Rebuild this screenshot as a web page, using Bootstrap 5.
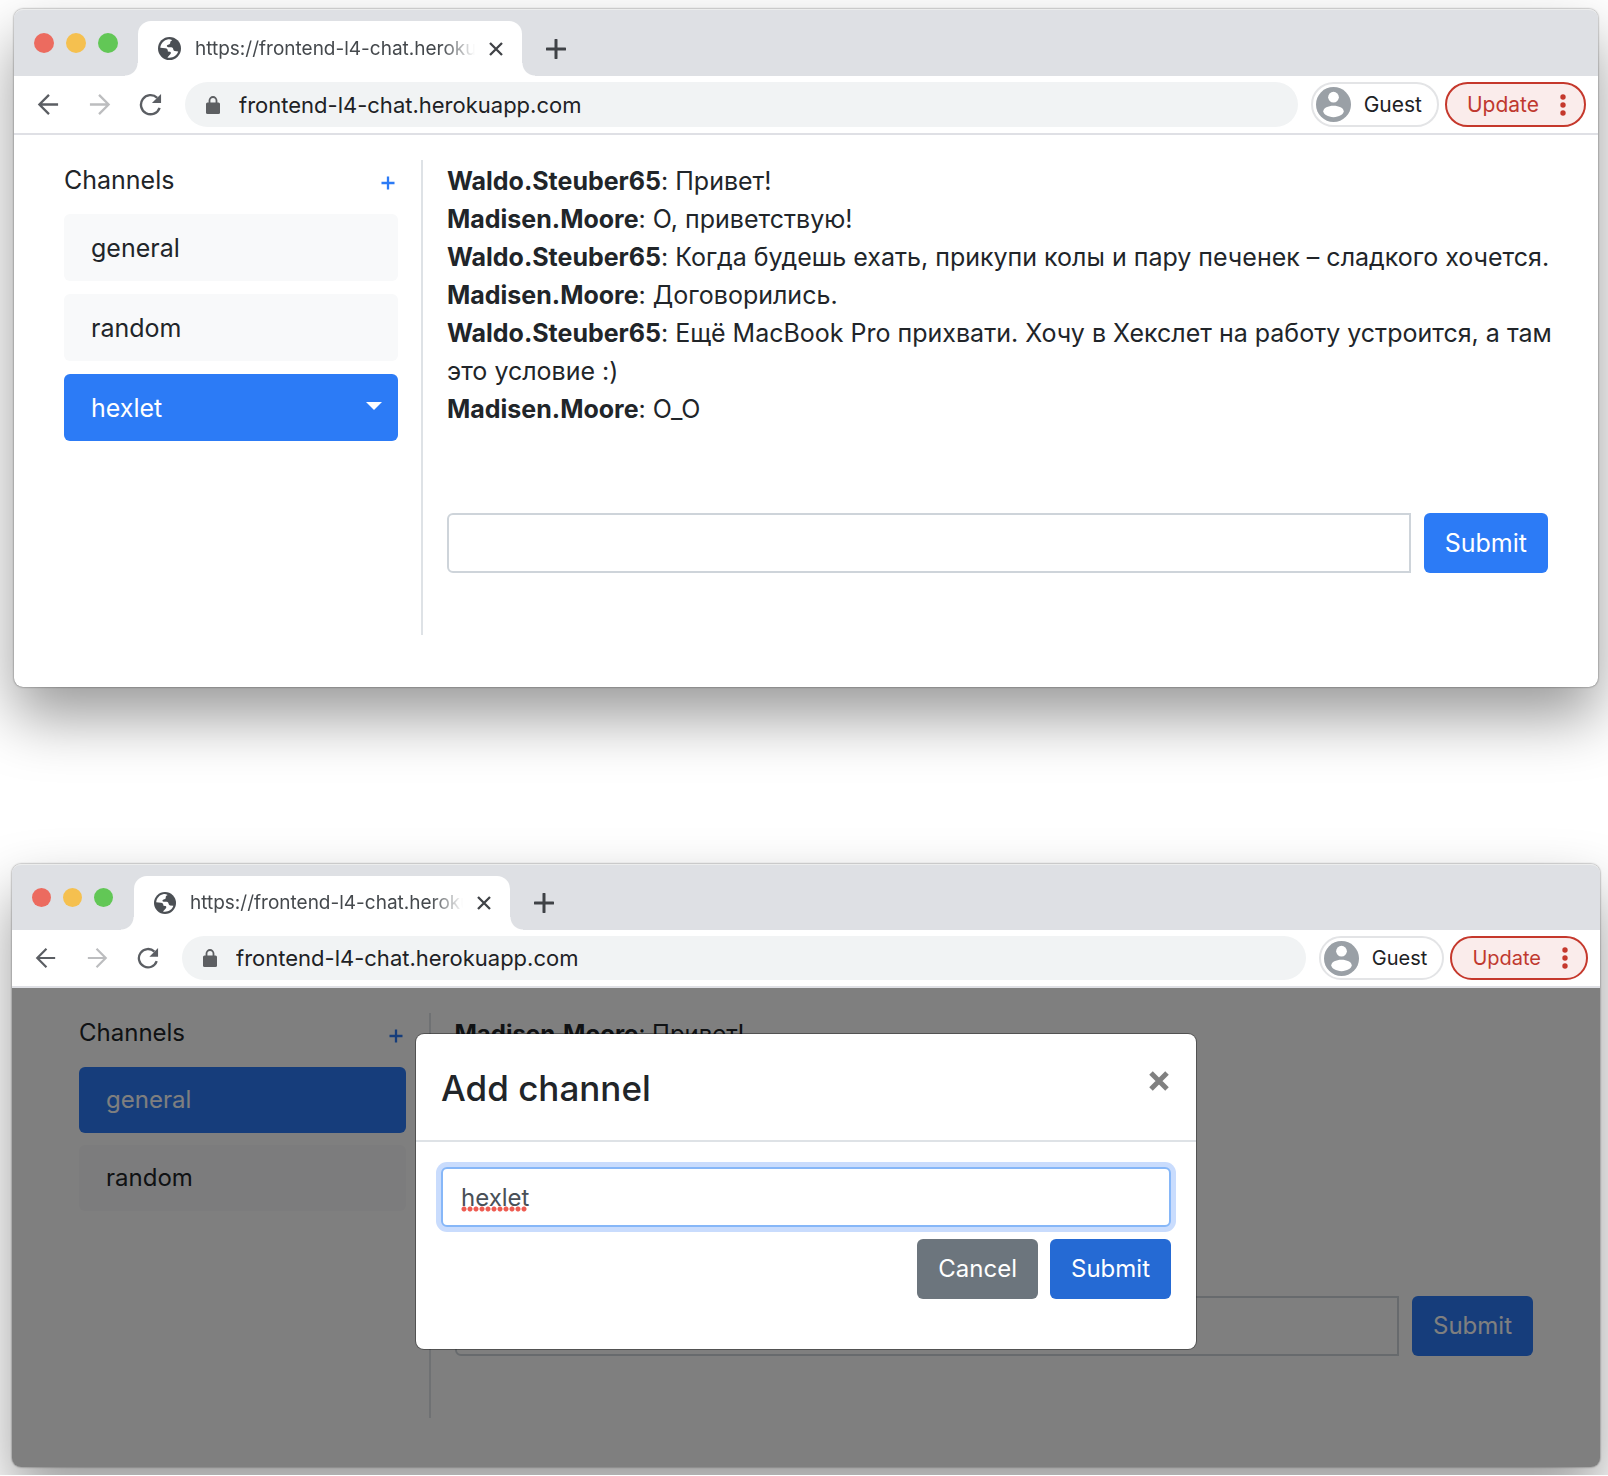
<!DOCTYPE html>
<html lang="en">
<head>
<meta charset="utf-8">
<meta name="viewport" content="width=device-width, initial-scale=1">
<title>Chat</title>
<link href="https://cdn.jsdelivr.net/npm/bootstrap@5.3.0/dist/css/bootstrap.min.css" rel="stylesheet">
<style>
  body { background: #fff; color: #212529; font-family: Inter, "Noto Sans", sans-serif; font-size: 24px; line-height: 38px; overflow-x: hidden; }
  button { font-family: inherit; }

  /* browser window frame */
  .win { background: #fff; font-size: var(--text); border-radius: 9px; box-shadow: 0 0 2px rgba(0,0,0,.6), 0 30px 60px rgba(0,0,0,.4); }
  .win-chat { --text: 25px; --strip: 67px; --light: 20px; --tab: 384px; --icon: 23px; --pill: 45px; --nav-gap: 28px; --chip-text: 21px; --side: 26px; --rows: 475px; --item: 67px; --item-gap: 13px; margin: 9px 10px 177px 14px; }
  .win-modal { --text: 24px; --strip: 66px; --light: 19px; --tab: 376px; --icon: 22px; --pill: 44px; --nav-gap: 29px; --chip-text: 20px; --side: 43px; --rows: 405px; --item: 66px; --item-gap: 12px; margin: 0 8px 8px 12px; }

  .strip { height: var(--strip); background: #dee0e4; border-radius: 9px 9px 0 0; box-shadow: inset 0 2px 0 -1px #eceded; }
  .lights { gap: 12px; padding: 0 20px; }
  .win-modal .lights { padding-right: 21px; }
  .light { width: var(--light); height: var(--light); border-radius: 50%; }
  .light-r { background: #ec6b5f; } .light-y { background: #f5c04f; } .light-g { background: #62c756; }
  .page-tab { position: relative; align-self: flex-end; width: var(--tab); height: calc(var(--strip) - 12px); padding: 0 19px 0 20px; background: #fff; border-radius: 13px 13px 0 0; color: #45494d; font-size: 19px; }
  .page-tab::before, .page-tab::after { content: ""; position: absolute; bottom: 0; width: 13px; height: 13px; }
  .page-tab::before { right: 100%; background: radial-gradient(circle at 0 0, transparent 12px, #fff 13px); }
  .page-tab::after { left: 100%; background: radial-gradient(circle at 100% 0, transparent 12px, #fff 13px); }
  .tab-name { flex: 1 1 0; margin: 0 14px; overflow: hidden; white-space: nowrap; -webkit-mask-image: linear-gradient(90deg, #000 88%, transparent); mask-image: linear-gradient(90deg, #000 88%, transparent); }
  .bare { background: none; border: 0; padding: 0; display: flex; align-items: center; }
  .new-tab { align-self: flex-end; height: calc(var(--strip) - 12px); margin-left: 24px; }
  .ico { width: var(--icon); height: var(--icon); flex: none; display: block; }

  .tools { padding: 6px 12px 6px 23px; border-bottom: 2px solid #dfe0e5; }
  .nav-icons { gap: var(--nav-gap); margin-right: 23px; }
  .pill { height: var(--pill); border-radius: 23px; }
  .address { background: #f1f3f4; padding: 0 21px; gap: 19px; margin-right: 13px; }
  .address input { border: 0; background: none; outline: 0; padding: 0; width: 100%; color: #202124; font-size: 22px; line-height: 30px; }
  .guest { border: 2px solid #e3e4e6; padding: 0 15px 0 3px; gap: 13px; margin-right: 6px; background: #fff; color: #202124; font-size: var(--chip-text); }
  .guest svg { width: 35px; height: 35px; }
  .update { border: 2px solid #c5382c; background: #faeceb; color: #c0392f; padding: 0 18px 0 20px; gap: 21px; font-size: var(--chip-text); }

  /* chat */
  .chat { padding: 25px var(--side) 52px; position: relative; }
  .win-modal .chat { padding-bottom: 49px; border-radius: 0 0 9px 9px; overflow: hidden; }
  .chat > .row { --bs-gutter-x: 48px; margin: 0; min-height: var(--rows); }
  .channels { border-right: 2px solid #dee2e6; padding-right: 23px; }
  .channels-head { height: 40px; margin-bottom: 14px; }
  .channel-list { gap: var(--item-gap); }
  .add { color: #2c7bf6; padding: 6px 3px 0 0; }
  .channel { width: 100%; height: var(--item); padding: 0 27px; text-align: left; border: 0; border-radius: 6px; background: #f8f9fa; color: #212529; }
  .channel.on, .go { background: #2c7bf6; color: #fff; }
  .channel-group .channel { flex: 1 1 auto; border-radius: 6px 0 0 6px; }
  .caret { width: 50px; flex: none; padding: 0 16px 4px 0; border: 0; border-radius: 0 6px 6px 0; background: #2c7bf6; display: flex; align-items: center; justify-content: flex-end; }
  .talk { padding-bottom: 62px; }
  .lines { padding-top: 2px; margin-right: -12px; }
  .lines p { margin: 0; }
  .field { height: 60px; border: 2px solid #ced4da; border-radius: 6px; padding: 0 18px; color: #495057; background: #fff; outline: 0; }
  .send .field { border-radius: 6px 0 0 6px; }
  .send { gap: 13px; }
  .act { height: 60px; border: 0; border-radius: 6px; padding: 0 21px; color: #fff; }

  /* dialog */
  .veil { position: absolute; inset: 0; background: rgba(0,0,0,.5); padding-top: 46px; }
  .sheet { width: 780px; max-width: 94%; background: #fff; border-radius: 8px; box-shadow: 0 0 0 1px rgba(0,0,0,.35); }
  .sheet-head { padding: 26px 27px 26px 25px; height: 108px; border-bottom: 2px solid #dee2e6; }
  .sheet-head h5 { font-size: 35px; line-height: 56px; font-weight: 500; margin: 0; }
  .sheet-body { padding: 25px 25px 50px; }
  .sheet .field { width: 100%; border-color: #86b7f8; box-shadow: 0 0 0 5px #c9dcfd; }
  .spell { position: relative; }
  .spell::after { content: ""; position: absolute; left: 20px; top: 39px; width: 66px; height: 6px; background: radial-gradient(circle at 3px 3px, #ee5b50 2px, transparent 3px) 0 0 / 6px 6px repeat-x; }
  .sheet-actions { gap: 12px; margin-top: 12px; }
  .stop { background: #6c757d; }
  .sheet .go { background: #256ad4; }
</style>
</head>
<body>
<svg width="0" height="0" class="position-absolute" aria-hidden="true">
  <symbol id="globe" viewBox="0 0 24 24"><circle cx="12" cy="12" r="12" fill="#4b4f54"/><path d="M10.700 2.300C6 3 2.800 7 2.400 11.200L7.600 11.700c2 .2 2.800 1.700 2.700 3.400l2.200.2c1 .2 1.300 1.600.5 2.500l-3.200 3.600c5.300 1 10-1.900 11.300-6.300l-3.600-.5c-1.200-.2-1.500-1.200-1.700-2.300-.3-1.500-1.500-1.700-3-1.700h-2.200c-1.400 0-1.900-1.600-.7-2.200l2-.9c.9-.4.9-1 .9-1.900 0-1.100.7-1.700 1.700-1.700V3c-1.100-.6-2.400-.9-3.800-.7z" fill="#fff"/></symbol>
  <symbol id="close" viewBox="0 0 14 14"><path d="M1 1l12 12M13 1L1 13" stroke="#404347" stroke-width="2.300"/></symbol>
  <symbol id="plus" viewBox="0 0 20 20"><path d="M10 1v18M1 10h18" stroke="#3f4246" stroke-width="3" stroke-linecap="round"/></symbol>
  <symbol id="back" viewBox="0 0 24 24"><path d="M22 12H3M12.500 2L2.500 12l10 10" fill="none" stroke="#5b5e63" stroke-width="2.400"/></symbol>
  <symbol id="forward" viewBox="0 0 24 24"><path d="M2 12h19M11.500 2l10 10-10 10" fill="none" stroke="#bcbdbf" stroke-width="2.400"/></symbol>
  <symbol id="reload" viewBox="0 0 24 24"><path d="M21.500 15.500A10 10 0 1 1 19 5" fill="none" stroke="#5b5e63" stroke-width="2.500"/><path d="M23 1v9.500h-9.500z" fill="#5b5e63"/></symbol>
  <symbol id="lock" viewBox="0 0 14 18"><path d="M3.500 7V4.500a3.500 3.500 0 0 1 7 0V7" fill="none" stroke="#5d5f62" stroke-width="1.800"/><rect y="6.500" width="14" height="11.500" rx="1.500" fill="#5d5f62"/></symbol>
  <symbol id="person" viewBox="0 0 36 36"><circle cx="18" cy="18" r="18" fill="#9aa0a6"/><circle cx="18" cy="10.500" r="5.500" fill="#fff"/><path d="M7.500 25c0-3.500 5-5.800 10.500-5.800S28.500 21.500 28.500 25c0 3-5 6-10.500 6S7.500 28 7.500 25z" fill="#fff"/></symbol>
  <symbol id="dots" viewBox="0 0 6 22"><g fill="#c5382c"><circle cx="3" cy="3" r="2.700"/><circle cx="3" cy="11" r="2.700"/><circle cx="3" cy="19" r="2.700"/></g></symbol>
  <symbol id="add" viewBox="0 0 14 14"><path d="M7 .5v13M.5 7h13" stroke="currentColor" stroke-width="2.300"/></symbol>
</svg>

<section class="win win-chat">
  <div class="strip d-flex align-items-center">
    <div class="lights d-flex"><span class="light light-r"></span><span class="light light-y"></span><span class="light light-g"></span></div>
    <div class="page-tab d-flex align-items-center">
      <svg class="ico"><use href="#globe"/></svg>
      <span class="tab-name">https://frontend-l4-chat.heroku</span>
      <button class="bare" aria-label="Close tab"><svg width="14" height="14"><use href="#close"/></svg></button>
    </div>
    <button class="bare new-tab" aria-label="New tab"><svg width="20" height="20"><use href="#plus"/></svg></button>
  </div>
  <div class="tools d-flex align-items-center">
    <div class="nav-icons d-flex">
      <button class="bare" aria-label="Back"><svg class="ico"><use href="#back"/></svg></button>
      <button class="bare" aria-label="Forward"><svg class="ico"><use href="#forward"/></svg></button>
      <button class="bare" aria-label="Reload"><svg class="ico"><use href="#reload"/></svg></button>
    </div>
    <div class="address pill d-flex align-items-center flex-grow-1">
      <svg width="14" height="18" class="flex-shrink-0"><use href="#lock"/></svg>
      <input type="text" aria-label="Address" value="frontend-l4-chat.herokuapp.com">
    </div>
    <button class="guest pill d-flex align-items-center"><svg><use href="#person"/></svg>Guest</button>
    <button class="update pill d-flex align-items-center">Update<svg width="6" height="22"><use href="#dots"/></svg></button>
  </div>
  <div class="chat">
    <div class="row">
      <div class="col-3 channels">
        <div class="channels-head d-flex align-items-center justify-content-between"><span>Channels</span><button class="bare add" aria-label="Add channel"><svg width="14" height="14"><use href="#add"/></svg></button></div>
        <div class="d-grid channel-list">
          <button class="channel">general</button>
          <button class="channel">random</button>
          <div class="channel-group d-flex"><button class="channel on">hexlet</button><button class="caret" aria-label="Manage channel"><svg width="16" height="8" viewBox="0 0 16 8"><path d="M0 0h16L8 8z" fill="#fff"/></svg></button></div>
        </div>
      </div>
      <div class="col-9 talk d-flex flex-column">
        <div class="lines flex-grow-1">
          <p><b>Waldo.Steuber65</b>: Привет!</p>
          <p><b>Madisen.Moore</b>: О, приветствую!</p>
          <p><b>Waldo.Steuber65</b>: Когда будешь ехать, прикупи колы и пару печенек – сладкого хочется.</p>
          <p><b>Madisen.Moore</b>: Договорились.</p>
          <p><b>Waldo.Steuber65</b>: Ещё MacBook Pro прихвати. Хочу в Хекслет на работу устроится, а там это условие :)</p>
          <p><b>Madisen.Moore</b>: О_О</p>
        </div>
        <form class="send d-flex"><input class="field flex-grow-1" type="text" aria-label="Message"><button type="button" class="act go">Submit</button></form>
      </div>
    </div>
  </div>
</section>

<section class="win win-modal">
  <div class="strip d-flex align-items-center">
    <div class="lights d-flex"><span class="light light-r"></span><span class="light light-y"></span><span class="light light-g"></span></div>
    <div class="page-tab d-flex align-items-center">
      <svg class="ico"><use href="#globe"/></svg>
      <span class="tab-name">https://frontend-l4-chat.heroku</span>
      <button class="bare" aria-label="Close tab"><svg width="14" height="14"><use href="#close"/></svg></button>
    </div>
    <button class="bare new-tab" aria-label="New tab"><svg width="20" height="20"><use href="#plus"/></svg></button>
  </div>
  <div class="tools d-flex align-items-center">
    <div class="nav-icons d-flex">
      <button class="bare" aria-label="Back"><svg class="ico"><use href="#back"/></svg></button>
      <button class="bare" aria-label="Forward"><svg class="ico"><use href="#forward"/></svg></button>
      <button class="bare" aria-label="Reload"><svg class="ico"><use href="#reload"/></svg></button>
    </div>
    <div class="address pill d-flex align-items-center flex-grow-1">
      <svg width="14" height="18" class="flex-shrink-0"><use href="#lock"/></svg>
      <input type="text" aria-label="Address" value="frontend-l4-chat.herokuapp.com">
    </div>
    <button class="guest pill d-flex align-items-center"><svg><use href="#person"/></svg>Guest</button>
    <button class="update pill d-flex align-items-center">Update<svg width="6" height="22"><use href="#dots"/></svg></button>
  </div>
  <div class="chat">
    <div class="row">
      <div class="col-3 channels">
        <div class="channels-head d-flex align-items-center justify-content-between"><span>Channels</span><button class="bare add" aria-label="Add channel"><svg width="14" height="14"><use href="#add"/></svg></button></div>
        <div class="d-grid channel-list">
          <button class="channel on">general</button>
          <button class="channel">random</button>
        </div>
      </div>
      <div class="col-9 talk d-flex flex-column">
        <div class="lines flex-grow-1"><p><b>Madisen.Moore</b>: Привет!</p></div>
        <form class="send d-flex"><input class="field flex-grow-1" type="text" aria-label="Message"><button type="button" class="act go">Submit</button></form>
      </div>
    </div>
    <div class="veil d-flex justify-content-center align-items-start">
      <div class="sheet" role="dialog" aria-labelledby="dlg-title">
        <div class="sheet-head d-flex justify-content-between"><h5 id="dlg-title">Add channel</h5>
          <button class="bare align-self-start pt-2" aria-label="Close"><svg width="20" height="26" viewBox="0 0 20 20"><path d="M2 2l16 16M18 2L2 18" stroke="#808080" stroke-width="5"/></svg></button></div>
        <div class="sheet-body">
          <div class="spell"><input class="field" type="text" aria-label="Channel name" spellcheck="false" value="hexlet"></div>
          <div class="sheet-actions d-flex justify-content-end"><button class="act stop">Cancel</button><button class="act go">Submit</button></div>
        </div>
      </div>
    </div>
  </div>
</section>
<script src="https://cdn.jsdelivr.net/npm/bootstrap@5.3.0/dist/js/bootstrap.bundle.min.js"></script>
</body>
</html>
